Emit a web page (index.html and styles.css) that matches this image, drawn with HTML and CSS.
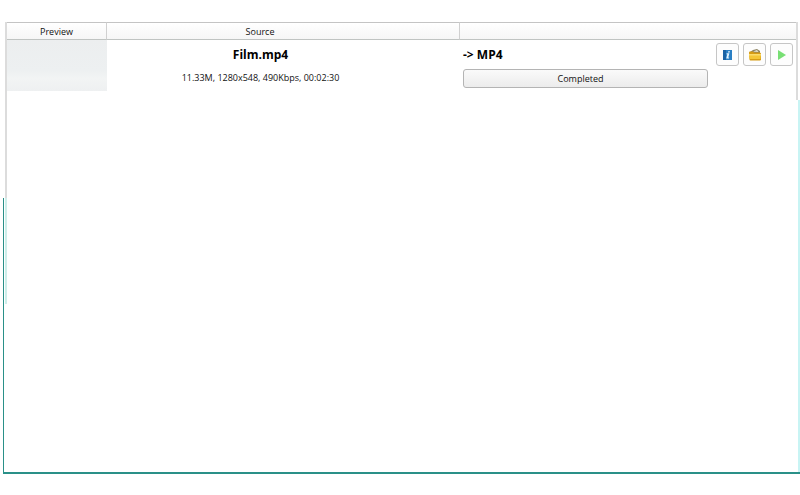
FILE: index.html
```
<!DOCTYPE html>
<html lang="en">
<head>
    <meta charset="utf-8">
    <title>Converter</title>
    <link rel="stylesheet" href="styles.css">
</head>
<body>
    <div class="window">
        <div class="edge-left"></div>
        <div class="list-edge"></div>
        <main class="list">
            <table class="jobs">
                <colgroup>
                    <col class="col-preview">
                    <col class="col-source">
                    <col>
                </colgroup>
                <thead>
                    <tr>
                        <th>Preview</th>
                        <th class="source">Source</th>
                        <td></td>
                    </tr>
                </thead>
                <tbody>
                    <tr>
                        <td class="preview"><div class="thumb"></div></td>
                        <td class="source">
                            <div class="name">Film.mp4</div>
                            <div class="info">11.33M, 1280x548, 490Kbps, 00:02:30</div>
                        </td>
                        <td class="output">
                            <div class="output-row">
                                <div class="target">
                                    <div class="name">-&gt; MP4</div>
                                    <button class="status">Completed</button>
                                </div>
                                <div class="actions">
                                    <button class="icon-btn" aria-label="Info">
                                        <svg width="12" height="12" viewBox="0 0 12 12">
                                            <rect x="1" y="1" width="9" height="10" fill="#2a7fc4"/>
                                            <path d="M1 1h3v10H1z" fill="#1b63a5"/>
                                            <path d="M6.200 2.200h1.800l-.3 1.400H5.900zM4.700 4.300h2.700L6.300 8.500h.9L7 9.500H4.200l1.100-4.200h-.9z" fill="#e4f4ff"/>
                                        </svg>
                                    </button>
                                    <button class="icon-btn" aria-label="Open folder">
                                        <svg width="14" height="14" viewBox="0 0 14 14">
                                            <path d="M2 4l3-2 4-1 3 2v2H2z" fill="#8d8362"/>
                                            <path d="M5 3.500L9 2l1.500 2z" fill="#e8e4d2"/>
                                            <path d="M1 4.500q0-1 1-1h3l1 1h6l1 1v6q0 1-1 1H2.500q-1 0-1-1z" fill="#d69b13"/>
                                            <path d="M1 6h12l-.6 5H1.600z" fill="#f5c636"/>
                                            <path d="M1 6h12v1.500H1z" fill="#fbdc6c"/>
                                        </svg>
                                    </button>
                                    <button class="icon-btn" aria-label="Play">
                                        <svg width="12" height="12" viewBox="0 0 12 12">
                                            <path d="M2 1l8 5L2 11z" fill="#78df74"/>
                                        </svg>
                                    </button>
                                </div>
                            </div>
                        </td>
                    </tr>
                </tbody>
            </table>
        </main>
        <div class="edge-right"></div>
    </div>
</body>
</html>
```
FILE: styles.css
```
* {
    box-sizing: border-box;
}
body {
    margin: 0;
    padding: 22px 0 21px 3px;
    height: 100vh;
    background: #fff;
    color: #111;
    font-family: "Open Sans", "Noto Sans", sans-serif;
    font-size: 9px;
    line-height: 12px;
}
.window {
    display: flex;
    height: 100%;
    border-bottom: 2px solid #2a9088;
}
.edge-left {
    width: 1px;
    margin: 176px 1px 0 0;
    background: #2a9088;
}
.list-edge {
    width: 2px;
    height: 282px;
    background: linear-gradient(#dcdcdc 176px, #cdeeea 176px);
}
.list {
    flex: 1;
    min-width: 0;
}
.edge-right {
    width: 2px;
    margin-top: 78px;
    background: #c8f4f4;
}
.jobs {
    width: 100%;
    height: 78px;
    table-layout: fixed;
    border-collapse: separate;
    border-spacing: 0;
    border-right: 2px solid #dcdcdc;
}
.col-preview {
    width: 100px;
}
.col-source {
    width: 353px;
}
th,
td {
    padding: 0;
    vertical-align: top;
}
thead th,
thead td {
    height: 18px;
    padding-top: 2px;
    border-top: 1px solid #c4c4c4;
    border-bottom: 1px solid #c0c4c2;
    background: linear-gradient(#fff, #f6f6f6);
    font-weight: normal;
    text-align: center;
    vertical-align: middle;
}
thead th {
    border-right: 1px solid #d0d0d0;
}
.jobs .source {
    padding-right: 46px;
    text-align: center;
}
.thumb {
    height: 51px;
    background: linear-gradient(#eceeef, #edf0f1 60%, #f2f4f4 75%, #eef0f1);
}
.name {
    padding-top: 6px;
    color: #000;
    font-size: 12px;
    font-weight: bold;
    line-height: 17px;
}
.info {
    padding-top: 9px;
}
.output-row {
    display: flex;
    gap: 8px;
    padding: 0 3px;
}
.target {
    flex: 1;
}
button {
    border: 1px solid #b4b4b4;
    border-radius: 3px;
    color: #111;
    font: inherit;
}
.status {
    display: block;
    width: 100%;
    height: 19px;
    margin-top: 6px;
    padding: 0 10px 0 0;
    background: linear-gradient(#fafafa, #ececec);
}
.actions {
    display: flex;
    gap: 4px;
    padding-top: 3px;
}
.icon-btn {
    display: flex;
    align-items: center;
    justify-content: center;
    width: 23px;
    height: 23px;
    padding: 0;
    border-color: #c6c6c6;
    background: #fdfdfd;
}
```
